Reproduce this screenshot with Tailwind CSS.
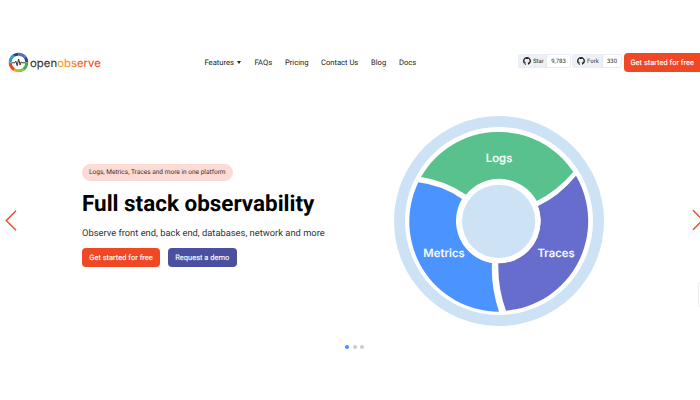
<!DOCTYPE html>
<html lang="en">
<head>
<meta charset="utf-8">
<title>OpenObserve</title>
<script src="https://cdn.jsdelivr.net/npm/@tailwindcss/browser@4"></script>
</head>
<body class="w-[700px] h-[400px] overflow-hidden bg-white text-[#222] font-['Roboto',sans-serif] [text-rendering:geometricPrecision]">
<svg class="hidden">
  <symbol id="gh" viewBox="0 0 16 16"><path d="M8 0C3.58 0 0 3.58 0 8c0 3.54 2.29 6.53 5.47 7.59.4.07.55-.17.55-.38 0-.19-.01-.82-.01-1.49-2.01.37-2.53-.49-2.69-.94-.09-.23-.48-.94-.82-1.13-.28-.15-.68-.52-.01-.53.63-.01 1.08.58 1.23.82.72 1.21 1.87.87 2.33.66.07-.52.28-.87.51-1.07-1.78-.2-3.64-.89-3.64-3.95 0-.87.31-1.59.82-2.15-.08-.2-.36-1.02.08-2.12 0 0 .67-.21 2.2.82a7.6 7.6 0 0 1 4 0c1.53-1.04 2.2-.82 2.2-.82.44 1.1.16 1.92.08 2.12.51.56.82 1.27.82 2.15 0 3.07-1.87 3.75-3.65 3.95.29.25.54.73.54 1.48 0 1.07-.01 1.93-.01 2.2 0 .21.15.46.55.38A8.01 8.01 0 0 0 16 8c0-4.42-3.58-8-8-8z"/></symbol>
</svg>
<header class="h-[75px] pt-[50px] flex items-center whitespace-nowrap">
  <a class="ml-2 w-[196.5px] flex items-center shrink-0">
    <svg class="w-[21px] h-[21px] shrink-0" viewBox="0 0 21 21" fill="none">
      <g stroke-width="3">
        <path d="M10.5 2.2A8.3 8.3 0 0 1 17.2 5.3" stroke="#5870c4"/>
        <path d="M17.2 5.3A8.3 8.3 0 0 1 18.8 10.5" stroke="#34408a"/>
        <path d="M18.8 10.5A8.3 8.3 0 0 1 15.5 17.2" stroke="#35b05a"/>
        <path d="M15.5 17.2A8.3 8.3 0 0 1 10 18.8" stroke="#8cc83d"/>
        <path d="M10 18.8A8.3 8.3 0 0 1 6 17.5" stroke="#f6a31b"/>
        <path d="M6 17.5A8.3 8.3 0 0 1 2.2 10.5" stroke="#ee4424"/>
        <path d="M2.2 10.5A8.3 8.3 0 0 1 5.8 3.6" stroke="#2aa0c8"/>
        <path d="M5.8 3.6A8.3 8.3 0 0 1 10.5 2.2" stroke="#29467a"/>
      </g>
      <path d="M3.8 10.8h3l1.1-1.6 1.3 4.5L10.6 7l1.5 6 1.1-3.2.9 1h3" stroke="#333" stroke-width="1"/>
    </svg>
    <span class="ml-[1px] w-[71px] text-[11.3px] leading-4 font-['Inter',sans-serif] tracking-[0.05px] [-webkit-text-stroke:0.15px]"><span class="text-[#333]">open</span><span class="text-[#f6a31b]">o</span><span class="text-[#f6951e]">b</span><span class="text-[#f48024]">s</span><span class="text-[#f26a25]">e</span><span class="text-[#f05826]">r</span><span class="text-[#ee4c26]">ve</span></span>
  </a>
  <nav class="w-[313.5px] shrink-0 flex text-[7.6px] leading-3 text-[#222]">
    <a class="w-[50px] flex items-center">Features<span class="ml-[3.5px] border-x-[2px] border-x-transparent border-t-[3px] border-t-[#222]"></span></a>
    <a class="w-[30.5px]">FAQs</a>
    <a class="w-[36px]">Pricing</a>
    <a class="w-[50px]">Contact Us</a>
    <a class="w-[28px]">Blog</a>
    <a>Docs</a>
  </nav>
  <div class="flex shrink-0 items-center text-[6px] text-[#333]">
    <div class="w-[53px] h-[14px] flex border border-[#e9edf2] rounded-[2px] -mt-[3px]">
      <span class="w-[28px] flex items-center pl-1 gap-[2px] bg-[#edf1f5] border-r border-[#e3e8ed]"><svg class="w-[8px] h-[8px]" fill="#222"><use href="#gh"/></svg>Star</span>
      <span class="flex-1 flex items-center justify-center">9,783</span>
    </div>
    <div class="ml-[1px] w-[50px] h-[14px] flex border border-[#e9edf2] rounded-[2px] -mt-[3px]">
      <span class="w-[30px] flex items-center pl-1 gap-[2px] bg-[#edf1f5] border-r border-[#e3e8ed]"><svg class="w-[8px] h-[8px]" fill="#222"><use href="#gh"/></svg>Fork</span>
      <span class="flex-1 flex items-center justify-center">330</span>
    </div>
    <a class="ml-[1.5px] w-[82px] h-[19px] pl-[7px] rounded-[4px] bg-[#f04824] text-white text-[7.5px] [-webkit-text-stroke:0.1px] flex items-center">Get started for free</a>
  </div>
</header>
<main class="h-[270px] flex relative whitespace-nowrap">
  <svg class="mt-[135px] ml-[5px] w-[12px] h-[21px] shrink-0" viewBox="0 0 12 21" fill="none" stroke="#f04824" stroke-width="1.4"><path d="M11 .8 1.3 10.5 11 20.2"/></svg>
  <section class="ml-[65px] w-[308px] pt-[89px] shrink-0">
    <div class="w-[151px] h-[17px] rounded-full bg-[#fddbd5] flex items-center pl-[7px] text-[6.55px] text-[#333]">Logs, Metrics, Traces and more in one platform</div>
    <h1 class="mt-[9px] text-[22.45px] leading-[28px] font-bold text-black">Full stack observability</h1>
    <p class="mt-[10px] text-[9.35px] leading-[12px] text-[#333]">Observe front end, back end, databases, network and more</p>
    <div class="mt-[8px] flex gap-[7.5px] text-white text-[7.5px] [-webkit-text-stroke:0.1px]">
      <a class="w-[78px] h-[19px] rounded-[4px] bg-[#f04824] flex items-center justify-center">Get started for free</a>
      <a class="w-[69.5px] h-[19px] rounded-[4px] bg-[#4a4f9f] flex items-center justify-center">Request a demo</a>
    </div>
  </section>
  <svg class="ml-[-5px] mt-[30px] w-[230px] h-[230px] shrink-0" viewBox="0 0 690 690">
    <circle cx="342" cy="348" r="315" fill="#cee2f6"/>
    <circle cx="342" cy="348" r="282" fill="#fff"/>
    <path fill="#58c18e" d="M108 216A269 270 0 0 1 565 201Q515 259 455 288A128 128 0 0 0 243 269Q182 227 108 216Z"/>
    <path fill="#666dcd" d="M573 212A269 270 0 0 1 363 617Q338 550 340 474A128 128 0 0 0 459 303Q523 273 573 212Z"/>
    <path fill="#4b94ff" d="M342 620A269 270 0 0 1 100 232Q173 241 231 282A128 128 0 0 0 321 474Q317 545 342 620Z"/>
    <circle cx="341" cy="349" r="126" fill="#fff"/>
    <circle cx="341" cy="349" r="110" fill="#cee2f6"/>
    <g fill="#fff" stroke="#fff" stroke-width=".5" font-family="Inter, sans-serif" font-weight="500" font-size="34" text-anchor="middle">
      <text x="342" y="172" textLength="80">Logs</text>
      <text x="177" y="457" textLength="124">Metrics</text>
      <text x="513" y="457" textLength="111">Traces</text>
    </g>
  </svg>
  <svg class="absolute left-[692px] top-[134px] w-[12px] h-[22px]" viewBox="0 0 12 22" fill="none" stroke="#f04824" stroke-width="1.4"><path d="M1 1.3 10.7 11 1 20.7"/></svg>
  <div class="absolute left-[698px] top-[207px] w-[8px] h-[25px] rounded-[2px] border border-[#eceef3] bg-white"></div>
</main>
<div class="flex justify-center gap-[3.4px] pl-[9px]">
  <i class="w-[4px] h-[4px] rounded-full bg-[#4490ff]"></i>
  <i class="w-[4px] h-[4px] rounded-full bg-[#ccc]"></i>
  <i class="w-[4px] h-[4px] rounded-full bg-[#ccc]"></i>
</div>
</body>
</html>
